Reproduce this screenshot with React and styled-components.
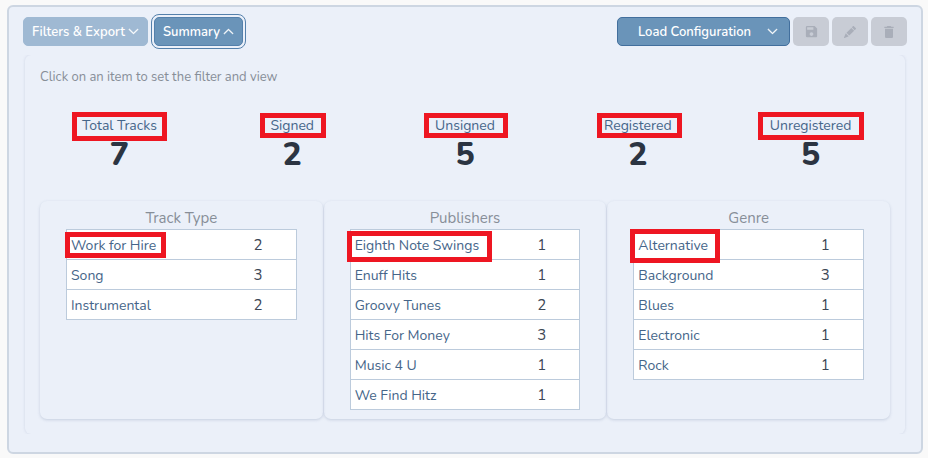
import React from "react";
import styled, { createGlobalStyle } from "styled-components";
import { BsChevronDown, BsChevronUp, BsPencilFill } from "react-icons/bs";
import { MdDelete, MdSave } from "react-icons/md";

const metrics = [
  { label: "Total Tracks", value: 7, mark: { x: -47, y: -5, w: 95, h: 29 } },
  { label: "Signed", value: 2, mark: { x: -32, y: -4, w: 66, h: 25 } },
  { label: "Unsigned", value: 5, mark: { x: -41, y: -4, w: 84, h: 25 } },
  { label: "Registered", value: 2, mark: { x: -41, y: -4, w: 85, h: 25 } },
  { label: "Unregistered", value: 5, mark: { x: -53, y: -5, w: 106, h: 28 } },
];

const groups = [
  {
    title: "Track Type",
    mark: { x: -2, y: 2, w: 101, h: 26 },
    rows: [
      ["Work for Hire", 2],
      ["Song", 3],
      ["Instrumental", 2],
    ],
  },
  {
    title: "Publishers",
    mark: { x: -4, y: 1, w: 145, h: 31 },
    rows: [
      ["Eighth Note Swings", 1],
      ["Enuff Hits", 1],
      ["Groovy Tunes", 2],
      ["Hits For Money", 3],
      ["Music 4 U", 1],
      ["We Find Hitz", 1],
    ],
  },
  {
    title: "Genre",
    mark: { x: -4, y: -1, w: 90, h: 34 },
    rows: [
      ["Alternative", 1],
      ["Background", 3],
      ["Blues", 1],
      ["Electronic", 1],
      ["Rock", 1],
    ],
  },
];

const App = () => {
  return (
    <>
      <GlobalStyle />
      <Frame>
        <Toolbar>
          <Button $faded>
            Filters &amp; Export <BsChevronDown />
          </Button>
          <Button $focused>
            Summary <BsChevronUp />
          </Button>
          <Actions>
            <LoadButton>
              <span>Load Configuration</span>
              <BsChevronDown />
            </LoadButton>
            <IconButton disabled aria-label="Save">
              <MdSave size={15} />
            </IconButton>
            <IconButton disabled aria-label="Edit">
              <BsPencilFill size={12} />
            </IconButton>
            <IconButton disabled aria-label="Delete">
              <MdDelete size={16} />
            </IconButton>
          </Actions>
        </Toolbar>
        <Panel>
          <Hint>Click on an item to set the filter and view</Hint>
          <Metrics>
            {metrics.map((metric) => (
              <Metric key={metric.label}>
                <ItemButton>{metric.label}</ItemButton>
                <span className="value">{metric.value}</span>
                <Mark $box={metric.mark} $origin="50%" />
              </Metric>
            ))}
          </Metrics>
          <Cards>
            {groups.map((group) => (
              <Card key={group.title}>
                <Table>
                  <caption>{group.title}</caption>
                  <tbody>
                    {group.rows.map(([name, count], i) => (
                      <tr key={name}>
                        <td>
                          <ItemButton>{name}</ItemButton>
                          {i === 0 && <Mark $box={group.mark} $origin="0px" />}
                        </td>
                        <td className="count">{count}</td>
                      </tr>
                    ))}
                  </tbody>
                </Table>
              </Card>
            ))}
          </Cards>
        </Panel>
      </Frame>
    </>
  );
};

export default App;

const GlobalStyle = createGlobalStyle`
  * {
    box-sizing: border-box;
  }

  body {
    margin: 0;
    background: #f9f9f9;
    font-family: Nunito, Lato, sans-serif;
    font-size: 15px;
    color: #2b3442;
  }

  button {
    font-family: inherit;
    cursor: pointer;
  }
`;

const Frame = styled.main`
  margin: 5px 5px 5px 7px;
  padding: 10px 14px 18px;
  border: 2px solid #cdd6e2;
  border-radius: 6px;
  background: #ebf0f9;
`;

const Toolbar = styled.div`
  display: flex;
  align-items: center;
  gap: 6px;
  height: 29px;
`;

const Actions = styled.div`
  display: flex;
  gap: 3px;
  margin-left: auto;
`;

const Button = styled.button`
  display: flex;
  align-items: center;
  justify-content: center;
  gap: 3px;
  height: 29px;
  padding: 0 8px;
  border: 1px solid ${(props) => (props.$faded ? "#9fb9d3" : "#5480ab")};
  border-radius: 5px;
  background: ${(props) => (props.$faded ? "#9fb9d3" : "#6a94b9")};
  color: #fff;
  font-size: 13px;
  font-weight: 600;
  white-space: nowrap;
  outline: ${(props) => (props.$focused ? "1px solid #5480ab" : "none")};
  outline-offset: 2px;

  svg {
    width: 11px;
    height: 11px;
    stroke-width: 1;
  }
`;

const LoadButton = styled(Button)`
  width: 173px;
  padding: 0 11px 0 20px;
  justify-content: space-between;
  border-color: #426f9d;
`;

const IconButton = styled.button`
  display: flex;
  align-items: center;
  justify-content: center;
  width: 36px;
  height: 29px;
  padding: 0;
  border: 0;
  border-radius: 5px;
  background: #c8ccd5;
  color: #a9aeb9;
`;

const Panel = styled.section`
  margin: 9px 2px 0 2px;
  padding: 12px 8px 15px;
  border-radius: 6px;
  box-shadow: 0 0 3px rgba(90, 110, 150, 0.2);
  clip-path: inset(0 -4px);
`;

const Hint = styled.p`
  margin: 0 7px;
  color: #878e98;
  font-size: 13px;
  line-height: 20px;
`;

const Metrics = styled.div`
  display: grid;
  grid-template-columns: repeat(5, 1fr);
  margin: 30px 0 26px;
`;

const Metric = styled.div`
  position: relative;
  display: flex;
  flex-direction: column;
  align-items: center;

  .value {
    font-size: 32px;
    font-weight: 800;
    line-height: 40px;
  }
`;

const ItemButton = styled.button`
  padding: 0;
  border: 0;
  background: none;
  color: #456589;
  font-size: 14px;
  line-height: 18px;
  white-space: nowrap;
`;

/* red callout drawn over an item */
const Mark = styled.span`
  position: absolute;
  left: calc(${(props) => props.$origin} + ${(props) => props.$box.x}px);
  top: ${(props) => props.$box.y}px;
  width: ${(props) => props.$box.w}px;
  height: ${(props) => props.$box.h}px;
  border: 5px solid #ee1622;
  pointer-events: none;
`;

const Cards = styled.div`
  display: grid;
  grid-template-columns: repeat(3, 1fr);
  gap: 1px;
  margin: 0 7px;
`;

const Card = styled.div`
  padding: 6px 26px 9px;
  border-radius: 7px;
  box-shadow: 0 1px 3px rgba(90, 110, 150, 0.25);
`;

const Table = styled.table`
  width: 100%;
  border-collapse: collapse;
  table-layout: fixed;

  caption {
    color: #878e98;
    line-height: 22px;
  }

  tr {
    height: 30px;
    border: 1px solid #bccbdc;
    background: #fff;
  }

  td {
    position: relative;
    padding: 0 4px;
  }

  .count {
    width: 33%;
    color: #3c4654;
    text-align: center;
  }
`;
